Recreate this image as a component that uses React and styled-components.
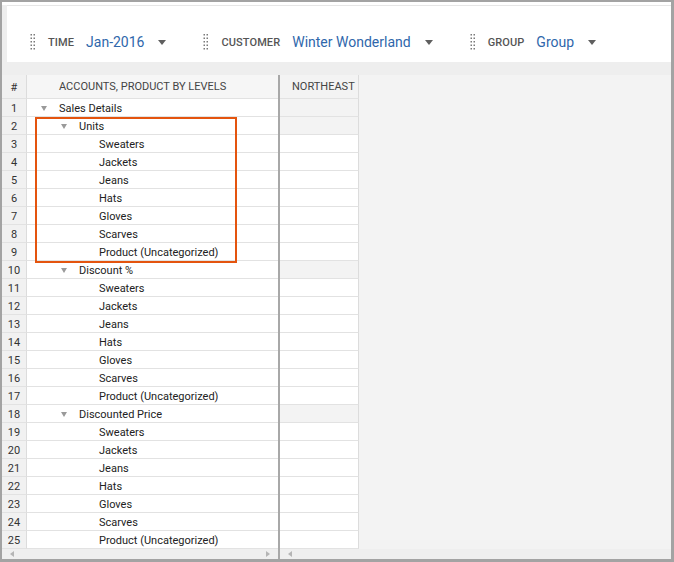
import React from 'react'
import styled, { createGlobalStyle } from 'styled-components'

const Global = createGlobalStyle`
  html, body { margin: 0; padding: 0; background: #fff; }
  body { font-family: Roboto, "Liberation Sans", Arial, sans-serif; }
`

const Frame = styled.div`
  box-sizing: border-box;
  width: 674px;
  height: 562px;
  border-style: solid;
  border-color: #a3a3a3;
  border-width: 2px 3px 3px 2px;
  background: #eeeeee;
  display: flex;
  flex-direction: column;
  overflow: hidden;
`

const TopStrip = styled.div`
  height: 3px;
  background: #fff;
`

const Toolbar = styled.div`
  box-sizing: border-box;
  height: 57px;
  margin-left: 5px;
  background: #fff;
  border-top: 1px solid #e6e6e6;
  display: flex;
  align-items: center;
  padding: 16px 0 0 23px;
`

const Filter = styled.div`
  display: flex;
  align-items: center;
  margin-right: ${p => p.gap}px;
`

const Handle = styled.svg`
  margin-right: 12px;
`

const Label = styled.span`
  font-size: 11px;
  font-weight: 500;
  color: #555;
  letter-spacing: 0.1px;
  margin-right: 12px;
`

const Value = styled.span`
  font-size: 14px;
  color: #2f67ab;
  margin-right: 14px;
`

const Caret = styled.span`
  width: 0;
  height: 0;
  border-left: 4px solid transparent;
  border-right: 4px solid transparent;
  border-top: 5px solid #5f5f5f;
`

const Gap = styled.div`
  height: 13px;
  background: #eeeeee;
`

const Grid = styled.div`
  flex: 1;
  display: flex;
  background: #f3f3f3;
`

const Pane = styled.div`
  position: relative;
  width: ${p => p.width ? `${p.width}px` : 'auto'};
  flex: ${p => p.width ? 'none' : 1};
  display: flex;
  flex-direction: column;
`

const Divider = styled.div`
  width: 2px;
  background: #a8a8a8;
`

const Line = styled.div`
  display: flex;
  height: ${p => p.head ? 24 : 18}px;
  box-sizing: border-box;
`

const NumCell = styled.div`
  box-sizing: border-box;
  width: 25px;
  background: #f1f1f1;
  border-right: 1px solid #dcdcdc;
  border-bottom: 1px solid #e2e2e2;
  font-size: 11px;
  color: #333;
  display: flex;
  align-items: center;
  justify-content: center;
  padding-top: 1px;
`

const NameCell = styled.div`
  box-sizing: border-box;
  flex: 1;
  background: ${p => p.head ? '#f6f6f6' : '#fff'};
  border-bottom: 1px solid #e2e2e2;
  font-size: 11px;
  color: ${p => p.head ? '#444' : '#222'};
  display: flex;
  align-items: center;
  padding-left: ${p => 14 + p.level * 20}px;
  padding-top: ${p => p.head ? 0 : 1}px;
  white-space: nowrap;
`

const Toggle = styled.span`
  width: 0;
  height: 0;
  border-left: 3.5px solid transparent;
  border-right: 3.5px solid transparent;
  border-top: 5px solid ${p => p.show ? '#9a9a9a' : 'transparent'};
  margin-right: 12px;
`

const DataCell = styled.div`
  box-sizing: border-box;
  width: 79px;
  background: ${p => p.shade ? '#f3f3f3' : '#fff'};
  border-right: 1px solid #dcdcdc;
  border-bottom: 1px solid #e2e2e2;
  font-size: 11px;
  color: #444;
  display: flex;
  align-items: center;
  padding-left: 12px;
`

const Scroll = styled.div`
  height: 10px;
  background: #efefef;
  display: flex;
  align-items: center;
  justify-content: space-between;
  padding: 0 8px;
`

const Arrow = styled.span`
  width: 0;
  height: 0;
  border-top: 3px solid transparent;
  border-bottom: 3px solid transparent;
  ${p => p.dir === 'left'
    ? 'border-right: 4px solid #b5b5b5;'
    : 'border-left: 4px solid #b5b5b5;'}
`

const Highlight = styled.div`
  position: absolute;
  left: 33px;
  top: 42px;
  width: 202px;
  height: 146px;
  box-sizing: border-box;
  border: 2.5px solid #e4540e;
  pointer-events: none;
`

const products = ['Sweaters', 'Jackets', 'Jeans', 'Hats', 'Gloves', 'Scarves', 'Product (Uncategorized)']

const rows = [
  { label: 'Sales Details', level: 0, group: true },
  { label: 'Units', level: 1, group: true },
  ...products.map(label => ({ label, level: 2 })),
  { label: 'Discount %', level: 1, group: true },
  ...products.map(label => ({ label, level: 2 })),
  { label: 'Discounted Price', level: 1, group: true },
  ...products.map(label => ({ label, level: 2 })),
]

const filters = [
  { label: 'TIME', value: 'Jan-2016', gap: 37 },
  { label: 'CUSTOMER', value: 'Winter Wonderland', gap: 37 },
  { label: 'GROUP', value: 'Group', gap: 0 },
]

const Dots = () => (
  <Handle width="6" height="18" viewBox="0 0 6 18">
    {[0, 1, 2, 3, 4].map(i => (
      <g key={i} fill="#7a7a7a">
        <rect x="0.5" y={1 + i * 3.5} width="1.5" height="1.5" />
        <rect x="3.5" y={1 + i * 3.5} width="1.5" height="1.5" />
      </g>
    ))}
  </Handle>
)

const App = () => {
  return (
    <>
      <Global />
      <Frame>
        <TopStrip />
        <Toolbar>
          {filters.map(f => (
            <Filter key={f.label} gap={f.gap}>
              <Dots />
              <Label>{f.label}</Label>
              <Value>{f.value}</Value>
              <Caret />
            </Filter>
          ))}
        </Toolbar>
        <Gap />
        <Grid>
          <Pane width={276}>
            <Line head>
              <NumCell>#</NumCell>
              <NameCell head level={0}>
                <Toggle />
                ACCOUNTS, PRODUCT BY LEVELS
              </NameCell>
            </Line>
            {rows.map((r, i) => (
              <Line key={i}>
                <NumCell>{i + 1}</NumCell>
                <NameCell level={r.level}>
                  <Toggle show={r.group} />
                  {r.label}
                </NameCell>
              </Line>
            ))}
            <Scroll>
              <Arrow dir="left" />
              <Arrow dir="right" />
            </Scroll>
            <Highlight />
          </Pane>
          <Divider />
          <Pane>
            <Line head>
              <DataCell shade>NORTHEAST</DataCell>
            </Line>
            {rows.map((r, i) => (
              <Line key={i}>
                <DataCell shade={r.group} />
              </Line>
            ))}
            <Scroll>
              <Arrow dir="left" />
            </Scroll>
          </Pane>
        </Grid>
      </Frame>
    </>
  )
}

export default App
